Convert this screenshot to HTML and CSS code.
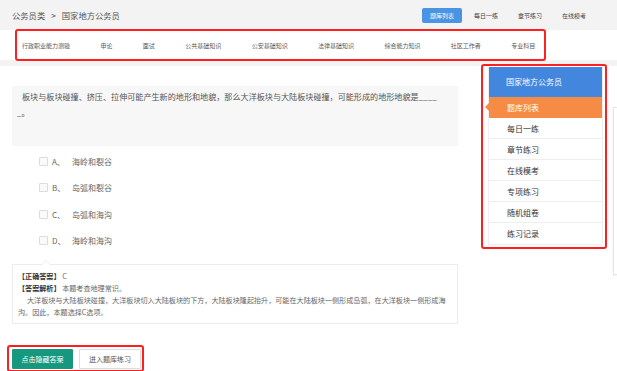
FILE: index.html
```html
<!DOCTYPE html>
<html lang="zh-CN">
<head>
    <meta charset="UTF-8">
    <meta name="viewport" content="width=device-width, initial-scale=1.0">
    <title>国家地方公务员 - 题库列表</title>
    <link rel="stylesheet" href="styles.css">
</head>
<body>
    <div class="topbar">
        <div class="crumb">公务员类<span class="sep">&gt;</span>国家地方公务员</div>
        <div class="tabs">
            <span class="tab active">题库列表</span>
            <span class="tab">每日一练</span>
            <span class="tab">章节练习</span>
            <span class="tab">在线模考</span>
        </div>
    </div>

    <div class="subnav-band">
        <div class="subnav">
            <span>行政职业能力测验</span>
            <span>申论</span>
            <span>面试</span>
            <span>公共基础知识</span>
            <span>公安基础知识</span>
            <span>法律基础知识</span>
            <span>综合能力知识</span>
            <span>社区工作者</span>
            <span>专业科目</span>
        </div>
    </div>

    <div class="main">
        <div class="content">
            <div class="question">板块与板块碰撞、挤压、拉伸可能产生新的地形和地貌，那么大洋板块与大陆板块碰撞，可能形成的地形地貌是____ _。</div>

            <ul class="options">
                <li><span class="box"></span><span class="letter">A、</span>海岭和裂谷</li>
                <li><span class="box"></span><span class="letter">B、</span>岛弧和裂谷</li>
                <li><span class="box"></span><span class="letter">C、</span>岛弧和海沟</li>
                <li><span class="box"></span><span class="letter">D、</span>海岭和海沟</li>
            </ul>

            <div class="answer">
                <p><b>【正确答案】</b> C</p>
                <p><b>【答案解析】</b> 本题考查地理常识。</p>
                <p class="explain">大洋板块与大陆板块碰撞，大洋板块切入大陆板块的下方，大陆板块隆起抬升，可能在大陆板块一侧形成岛弧，在大洋板块一侧形成海沟。因此，本题选择C选项。</p>
            </div>

            <div class="actions">
                <button class="btn btn-green">点击隐藏答案</button>
                <button class="btn">进入题库练习</button>
            </div>
        </div>

        <div class="side-wrap">
            <div class="side">
                <div class="side-title">国家地方公务员</div>
                <div class="side-item current">题库列表</div>
                <div class="side-item">每日一练</div>
                <div class="side-item">章节练习</div>
                <div class="side-item">在线模考</div>
                <div class="side-item">专项练习</div>
                <div class="side-item">随机组卷</div>
                <div class="side-item">练习记录</div>
            </div>
        </div>
    </div>

    <div class="float-edge"></div>
</body>
</html>
```

FILE: styles.css
```css
body {
    margin: 0;
    background-color: #ffffff;
    font-family: "Noto Sans CJK SC", "Liberation Sans", sans-serif;
    color: #444;
}

/* top bar */
.topbar {
    height: 30px;
    background-color: #f3f3f3;
    display: flex;
    justify-content: space-between;
    align-items: center;
    padding: 0 23px 0 12px;
}
.crumb {
    font-size: 8.3px;
    color: #555;
}
.crumb .sep {
    margin: 0 6px;
}
.tabs {
    display: flex;
    gap: 4px;
}
.tab {
    width: 40px;
    height: 15px;
    line-height: 15px;
    text-align: center;
    font-size: 6px;
    color: #444;
    border-radius: 2px;
}
.tab.active {
    background-color: #4a94e3;
    color: #fff;
}

/* sub navigation */
.subnav-band {
    height: 30px;
    background-color: #fff;
    border-bottom: 6px solid #f3f3f3;
    display: flex;
    align-items: center;
}
.subnav {
    margin-left: 15px;
    width: 531px;
    height: 32px;
    box-sizing: border-box;
    border: 2px solid #ff1f1f;
    border-radius: 3px;
    padding-left: 5px;
    display: flex;
    align-items: center;
    gap: 30.4px;
    font-size: 6px;
    color: #555;
}

/* main area */
.main {
    display: flex;
    align-items: flex-start;
    padding-left: 12px;
}
.content {
    width: 446px;
    margin-top: 20px;
}
.question {
    min-height: 60px;
    box-sizing: border-box;
    background-color: #f7f7f7;
    padding: 3px 15px 0 5px;
    text-indent: 5px;
    font-size: 8.1px;
    line-height: 16px;
    color: #555;
}
.options {
    list-style: none;
    margin: 2px 0 0;
    padding: 0;
}
.options li {
    display: flex;
    align-items: center;
    height: 26.5px;
    font-size: 8px;
    color: #666;
}
.box {
    width: 9px;
    height: 9px;
    box-sizing: border-box;
    border: 1px solid #dcdcdc;
    border-radius: 1px;
    background-color: #fafafa;
    margin: 0 4px 0 27px;
}
.letter {
    width: 20px;
}

.answer {
    position: relative;
    margin-top: 10px;
    border: 1px solid #ececec;
    padding: 5px 8px 5px 5px;
    font-size: 7.1px;
    line-height: 12px;
    color: #666;
}
.answer::before,
.answer::after {
    content: "";
    position: absolute;
    left: 28px;
    border: 5px solid transparent;
    border-top: 0;
}
.answer::before {
    top: -5px;
    border-bottom: 5px solid #ececec;
}
.answer::after {
    top: -4px;
    border-bottom: 5px solid #fff;
}
.answer p {
    margin: 0;
}
.answer b {
    color: #333;
}
.answer .explain {
    text-indent: 9px;
}

.actions {
    display: inline-flex;
    gap: 6px;
    margin: 21px 0 0 -5px;
    padding: 2px 1px 1px 3px;
    border: 2px solid #ff1f1f;
    border-radius: 3px;
}
.btn {
    height: 20px;
    width: 62px;
    padding: 0;
    font-family: inherit;
    font-size: 7px;
    color: #555;
    background-color: #fff;
    border: 1px solid #dedede;
    border-radius: 1px;
}
.btn-green {
    width: 61px;
    background-color: #16987f;
    border-color: #16987f;
    color: #fff;
}

/* sidebar */
.side-wrap {
    margin: -2px 0 0 23px;
    width: 126px;
    box-sizing: border-box;
    border: 2px solid #ff1f1f;
    border-radius: 3px;
    padding: 1px 2px 2px 5px;
}
.side {
    border: 1px solid #eee;
    border-top: 0;
}
.side-title {
    height: 30px;
    line-height: 30px;
    background-color: #4286de;
    color: #fff;
    font-size: 8px;
    padding-left: 17px;
}
.side-item {
    position: relative;
    height: 21px;
    line-height: 21px;
    box-sizing: border-box;
    border-bottom: 1px solid #eeeeee;
    font-size: 8px;
    color: #333;
    padding-left: 18px;
}
.side-item:last-child {
    border-bottom: 0;
}
.side-item.current {
    background-color: #f68b45;
    color: #fff;
    border-bottom: 0;
}
.side-item.current::before {
    content: "";
    position: absolute;
    left: -4px;
    top: 6px;
    border-top: 4px solid transparent;
    border-bottom: 4px solid transparent;
    border-right: 4px solid #f68b45;
}

/* floating toolbar edge, cut off by the window */
.float-edge {
    position: fixed;
    right: 0;
    top: 107px;
    width: 3px;
    height: 166px;
    border: 1px solid #e6e6e6;
    border-right: 0;
    background-color: #fff;
    box-shadow: 0 1px 3px rgba(0, 0, 0, 0.08);
}
```
